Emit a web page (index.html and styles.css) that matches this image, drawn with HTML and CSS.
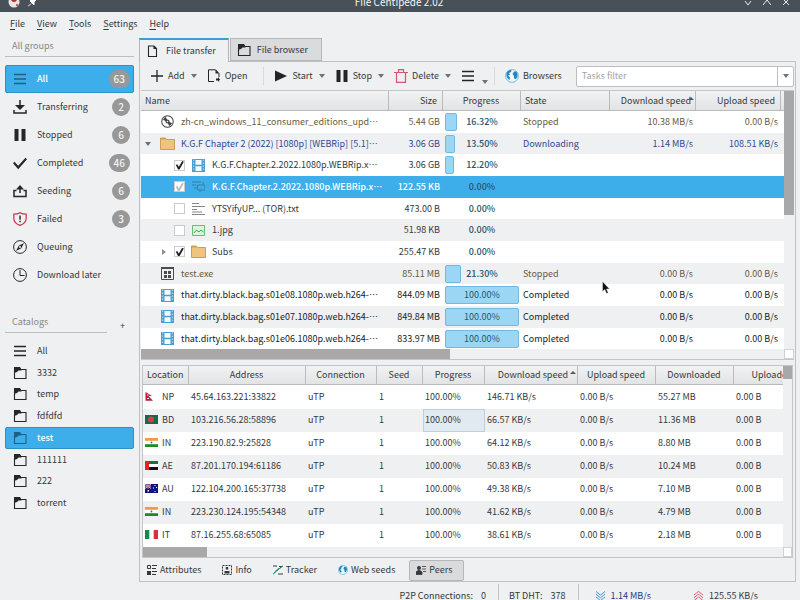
FILE: index.html
```html
<!DOCTYPE html>
<html lang="en">
<head>
<meta charset="utf-8">
<title>File Centipede 2.02</title>
<link rel="stylesheet" href="styles.css">
</head>
<body>
<svg class="defs" aria-hidden="true">
  <symbol id="menu" viewBox="0 0 14 14"><path d="M1 2.500h12M1 7h12M1 11.500h12" stroke="currentColor" stroke-width="1.500"/></symbol>
  <symbol id="download" viewBox="0 0 14 14"><path d="M7 0v8M1 10v3h12v-3" fill="none" stroke="currentColor" stroke-width="1.500"/><path d="M2 5h10L7 10z" fill="currentColor"/></symbol>
  <symbol id="pause" viewBox="0 0 14 14"><path d="M1.500 1h4v12h-4zM8.500 1h4v12h-4z" fill="currentColor"/></symbol>
  <symbol id="check" viewBox="0 0 14 14"><path d="M.7 6.500l4.500 5L13.300 2.500" fill="none" stroke="currentColor" stroke-width="2.200"/></symbol>
  <symbol id="upload" viewBox="0 0 14 14"><path d="M7 9V4M3.500 6.500H1v6h12v-6h-2.500" fill="none" stroke="currentColor" stroke-width="1.500"/><path d="M3 5.500h8L7 1z" fill="currentColor"/></symbol>
  <symbol id="shield" viewBox="0 0 14 14"><path d="M7 .7c2 1.300 4 1.500 6.200 1.500v4c0 3.500-3 6-6.200 7.200C3.800 12.200.8 9.700.8 6.200v-4C3 2.200 5 2 7 .7z" fill="none" stroke="#c9304f" stroke-width="1.200"/><path d="M6.300 3.500h1.500v4.200H6.300zM6.300 8.800h1.500v1.500H6.300z" fill="#333"/></symbol>
  <symbol id="compass" viewBox="0 0 14 14"><circle cx="7" cy="7" r="6.400" fill="none" stroke="currentColor"/><path d="M11 3L8.300 8.300 3 11l2.700-5.300z" fill="currentColor"/><circle cx="7" cy="7" r="1" fill="#eff0f1"/></symbol>
  <symbol id="clock" viewBox="0 0 14 14"><circle cx="7" cy="7" r="6.400" fill="none" stroke="currentColor"/><path d="M7 2v5.500h4.500" fill="none" stroke="currentColor"/></symbol>
  <symbol id="catalog" viewBox="0 0 14 14"><path d="M1.500 5v7.500h11.500V3.500H6" fill="none" stroke="currentColor" stroke-width="1.100"/><path d="M1 1h6l1.500 2.500v1H5.500L4 6 1 7z" fill="currentColor"/></symbol>
  <symbol id="page" viewBox="0 0 14 14"><path d="M2.500 2h5.500L10.500 4.500V12.500h-8zM8 2v2.500h2.500" fill="none" stroke="currentColor" stroke-width="1.100"/></symbol>
  <symbol id="plus" viewBox="0 0 14 14"><path d="M7 1v12M1 7h12" stroke="currentColor" stroke-width="1.300"/></symbol>
  <symbol id="open" viewBox="0 0 14 14"><path d="M7 12.500H1.500V.8h7L12 4.500V8" fill="none" stroke="currentColor"/><path d="M8.500.8v3.700H12zM9 9.500h2V8l2 2.500-2 2.500v-1.500H9z" fill="currentColor"/></symbol>
  <symbol id="play" viewBox="0 0 14 14"><path d="M1 1.500L13 7 1 12.500z" fill="currentColor"/></symbol>
  <symbol id="trash" viewBox="0 0 14 14"><path d="M0 3.500h14M4.500 3V.6h5V3M2.500 3.500v9.900h9V3.500" fill="none" stroke="#d8556f" stroke-width="1.200"/></symbol>
  <symbol id="globe" viewBox="0 0 14 14"><circle cx="7" cy="7" r="6.400" fill="#eef7fc" stroke="#5aa9d6" stroke-width=".8"/><path d="M2 3c1.500-1.700 3-2 4.500-2l-.5 2-2 1 1 2-2 .5 2 2-.5 2.500C2 10 .5 6 2 3zM9 2.500l2.500 0c1.500 2.500 1.500 5-.5 7.500L9 9.500V7L7.500 5z" fill="#2188c6"/></symbol>
  <symbol id="disc" viewBox="0 0 14 14"><circle cx="7" cy="7" r="6.200" fill="none" stroke="#444" stroke-width="1.100"/><path d="M2 5l3-3 2 4-1 1zM12 9l-3 3-2-4 1-1z" fill="#444"/><circle cx="7" cy="7" r="2.200" fill="#444"/><circle cx="7" cy="7" r=".9" fill="#fff"/></symbol>
  <symbol id="folder" viewBox="0 0 15 13"><path d="M.5 1h5l1 1.500h8v10H.5z" fill="#efc57e" stroke="#c99f58"/><path d="M.5 1h5v1.500h-5z" fill="#cfa050"/></symbol>
  <symbol id="film" viewBox="0 0 13 13"><path d="M0 0h13v13H0z" fill="#4a9fd0"/><path d="M3.500 1h6v4.800h-6zM3.500 7.200h6V12h-6z" fill="#f4fbff"/><path d="M1.700.5v12M11.300.5v12" stroke="#b5dcf0" stroke-width="1" stroke-dasharray="1.500 1.500"/></symbol>
  <symbol id="sub" viewBox="0 0 13 13"><path d="M0 2h9M0 5h4M5.500 5H13v5H5.500zM2 8h3M8 10v2M10 3h2" fill="none" stroke="#3380ad"/></symbol>
  <symbol id="text" viewBox="0 0 13 13"><path d="M0 1.500h7M0 4.500h13M0 7.500h5M0 10h10M0 12.500h13" stroke="#777" stroke-width=".9"/></symbol>
  <symbol id="image" viewBox="0 0 13 13"><path d="M.5 1.500h12v10H.5z" fill="#dcf5df" stroke="#63bf74"/><path d="M2 9l2.500-3L7 8l2-2 2.500 2" fill="none" stroke="#3ba953"/></symbol>
  <symbol id="exe" viewBox="0 0 13 13"><path d="M.5.500h12v12H.5z" fill="none" stroke="#4b4b4b"/><path d="M0 0h13v2H0zM3 4h3v3H3zM7 4h3v3H7zM3 8h3v3H3zM7 8h3v3H7z" fill="#4b4b4b"/></symbol>
  <symbol id="attrs" viewBox="0 0 10 10"><path d="M.5.500h3v3h-3z" fill="none" stroke="currentColor"/><path d="M0 6h4v4H0z" fill="currentColor"/><path d="M5 .5h5M5 3.500h4M5 6.500h5M5 9.500h4" stroke="currentColor"/></symbol>
  <symbol id="info" viewBox="0 0 10 10"><path d="M.5.500h9v9h-9z" fill="none" stroke="currentColor" stroke-dasharray="2 1"/><path d="M3.800 2h2.400v2.500H3.800zM2.500 8.500V6h5v2.500z" fill="currentColor"/></symbol>
  <symbol id="tracker" viewBox="0 0 10 10"><path d="M0 1h4M6 1.500h3.500M1 8L9.500 1M5 9h5" stroke="currentColor" fill="none"/><path d="M0 9c3-1 2-4 5-5s3-1 4-3" stroke="#1a9a8a" fill="none"/></symbol>
  <symbol id="peers" viewBox="0 0 10 10"><circle cx="3" cy="3" r="2" fill="currentColor"/><path d="M0 9.500V7l2-1.500h2L6 7v2.500zM6 1.500h4M6 4h4M7 6.500h3" stroke="currentColor" stroke-width=".8" fill="currentColor"/></symbol>
  <symbol id="down2" viewBox="0 0 12 12"><path d="M1 1l5 4 5-4M1 4l5 4 5-4M1 7l5 4 5-4" fill="none" stroke="#2f8fd0"/></symbol>
  <symbol id="up2" viewBox="0 0 12 12"><path d="M1 5l5-4 5 4M1 8l5-4 5 4M1 11l5-4 5 4" fill="none" stroke="#da4f68"/></symbol>
  <symbol id="np" viewBox="0 0 13 9"><path d="M.5 0L7 4H3.500L8 8.700H.5z" fill="#b8203a"/><path d="M2 3h1.500M2 6.500h2" stroke="#fff"/></symbol>
  <symbol id="bd" viewBox="0 0 13 9"><path d="M0 0h13v9H0z" fill="#17684f"/><circle cx="6" cy="4.500" r="3" fill="#e0384b"/></symbol>
  <symbol id="in" viewBox="0 0 13 9"><path d="M0 0h13v9H0z" fill="#fff"/><path d="M0 0h13v2.800H0z" fill="#f29a45"/><path d="M0 6.200h13V9H0z" fill="#218a27"/><circle cx="6.500" cy="4.500" r=".9" fill="#4b5aa8"/></symbol>
  <symbol id="ae" viewBox="0 0 13 9"><path d="M0 0h13v9H0z" fill="#fff"/><path d="M4 0h9v3H4z" fill="#15733c"/><path d="M4 6h9v3H4z" fill="#111"/><path d="M0 0h4v9H0z" fill="#ee1c25"/></symbol>
  <symbol id="au" viewBox="0 0 13 9"><path d="M0 0h13v9H0z" fill="#12147e"/><path d="M0 0l6 4.500M6 0L0 4.500M3 0v4.500M0 2.200h6" stroke="#fff" stroke-width=".8"/><path d="M3 0v4.500M0 2.200h6" stroke="#d8304a" stroke-width=".6"/><path d="M2.500 6h1.500v1.500H2.500zM9.500 1h1v1h-1zM8 3.500h1v1H8zM11 3h1v1h-1zM9.500 7h1v1h-1z" fill="#fff"/></symbol>
  <symbol id="it" viewBox="0 0 13 9"><path d="M0 0h13v9H0z" fill="#fff"/><path d="M0 0h4.300v9H0z" fill="#168a4c"/><path d="M8.700 0H13v9H8.700z" fill="#d0333f"/></symbol>
</svg>
<div class="window">
  <header class="titlebar">
    <div class="title-row">
      <div class="title-side">
        <svg width="12" height="12" viewBox="0 0 12 12"><circle cx="6" cy="6" r="5.500" fill="#e8e4e4"/><circle cx="6" cy="3" r="3" fill="#a33"/><circle cx="9" cy="9" r="1" fill="#a33"/></svg>
        <svg width="8" height="12" viewBox="0 0 8 12"><path d="M0 10.500l3-3M2 5l4 4 0-3 2-2-3-2-2 2z" fill="#fff" stroke="#fff"/></svg>
      </div>
      <span>File Centipede 2.02</span>
      <div class="title-side title-end">
        <svg width="8" height="8" viewBox="0 0 8 8"><path d="M1 3l3 4 3-4" fill="none" stroke="#eee"/></svg>
        <svg width="8" height="8" viewBox="0 0 8 8"><path d="M0 7l4-5 4 5" fill="none" stroke="#eee"/></svg>
        <svg width="8" height="8" viewBox="0 0 8 8"><path d="M1 1l6 6M7 1L1 7" fill="none" stroke="#eee"/></svg>
      </div>
    </div>
  </header>
  <nav class="menubar">
    <button><u>F</u>ile</button><button><u>V</u>iew</button><button><u>T</u>ools</button><button><u>S</u>ettings</button><button><u>H</u>elp</button>
  </nav>
  <div class="content">
    <aside class="sidebar">
      <h2>All groups</h2>
      <ul class="groups">
        <li><button class="item selected"><svg><use href="#menu"/></svg>All<span class="badge">63</span></button></li>
        <li><button class="item"><svg><use href="#download"/></svg>Transferring<span class="badge">2</span></button></li>
        <li><button class="item"><svg><use href="#pause"/></svg>Stopped<span class="badge">6</span></button></li>
        <li><button class="item"><svg><use href="#check"/></svg>Completed<span class="badge">46</span></button></li>
        <li><button class="item"><svg><use href="#upload"/></svg>Seeding<span class="badge">6</span></button></li>
        <li><button class="item"><svg><use href="#shield"/></svg>Failed<span class="badge">3</span></button></li>
        <li><button class="item"><svg><use href="#compass"/></svg>Queuing</button></li>
        <li><button class="item"><svg><use href="#clock"/></svg>Download later</button></li>
      </ul>
      <div class="catalog-head"><h2>Catalogs</h2><button class="add" aria-label="Add catalog">+</button></div>
      <ul class="catalogs">
        <li><button class="item"><svg><use href="#menu"/></svg>All</button></li>
        <li><button class="item"><svg><use href="#catalog"/></svg>3332</button></li>
        <li><button class="item"><svg><use href="#catalog"/></svg>temp</button></li>
        <li><button class="item"><svg><use href="#catalog"/></svg>fdfdfd</button></li>
        <li><button class="item selected"><svg><use href="#catalog"/></svg>test</button></li>
        <li><button class="item"><svg><use href="#catalog"/></svg>111111</button></li>
        <li><button class="item"><svg><use href="#catalog"/></svg>222</button></li>
        <li><button class="item"><svg><use href="#catalog"/></svg>torrent</button></li>
      </ul>
    </aside>
    <main class="main">
      <div class="tabs">
        <button class="tab current-tab"><svg><use href="#page"/></svg>File transfer</button>
        <button class="tab"><svg><use href="#catalog"/></svg>File browser</button>
      </div>
      <div class="panel">
        <div class="toolbar">
          <button class="tool"><svg><use href="#plus"/></svg>Add<i class="caret"></i></button>
          <button class="tool open"><svg><use href="#open"/></svg>Open</button>
          <span class="sep"></span>
          <button class="tool"><svg><use href="#play"/></svg>Start<i class="caret"></i></button>
          <button class="tool"><svg><use href="#pause"/></svg>Stop<i class="caret"></i></button>
          <button class="tool"><svg><use href="#trash"/></svg>Delete<i class="caret"></i></button>
          <button class="tool more" aria-label="More"><svg><use href="#menu"/></svg><i class="caret"></i></button>
          <span class="sep"></span>
          <button class="tool"><svg><use href="#globe"/></svg>Browsers</button>
          <div class="filter"><input type="text" placeholder="Tasks filter" aria-label="Tasks filter"><button aria-label="Filter history"><i class="caret"></i></button></div>
        </div>
        <section class="pane tasks">
          <div class="view">
            <table>
              <colgroup><col><col class="c-size"><col class="c-prog"><col class="c-state"><col class="c-down"><col class="c-up"><col class="c-end"></colgroup>
              <thead><tr><th class="left">Name</th><th class="right">Size</th><th>Progress</th><th class="left">State</th><th class="right sorted">Download speed</th><th class="right">Upload speed</th><th></th></tr></thead>
              <tbody>
                <tr class="stopped"><td><div class="name"><i></i><svg><use href="#disc"/></svg><span>zh-cn_windows_11_consumer_editions_upd<span lang="zh-CN">⋯</span></span></div></td><td>5.44 GB</td><td><div class="bar"><i style="width:16.32%"></i><span>16.32%</span></div></td><td>Stopped</td><td>10.38 MB/s</td><td>0.00 B/s</td><td></td></tr>
                <tr class="active"><td><div class="name"><i class="twisty"></i><svg class="wide"><use href="#folder"/></svg><span>K.G.F Chapter 2 (2022) [1080p] [WEBRip] [5.1]<span lang="zh-CN">⋯</span></span></div></td><td>3.06 GB</td><td><div class="bar"><i style="width:13.5%"></i><span>13.50%</span></div></td><td>Downloading</td><td>1.14 MB/s</td><td>108.51 KB/s</td><td></td></tr>
                <tr><td><label class="name child"><i></i><input type="checkbox" checked><svg><use href="#film"/></svg><span>K.G.F.Chapter.2.2022.1080p.WEBRip.x<span lang="zh-CN">⋯</span></span></label></td><td>3.06 GB</td><td><div class="bar"><i style="width:12.2%"></i><span>12.20%</span></div></td><td></td><td></td><td></td><td></td></tr>
                <tr class="selected"><td><label class="name child"><i></i><input type="checkbox" checked><svg><use href="#sub"/></svg><span>K.G.F.Chapter.2.2022.1080p.WEBRip.x<span lang="zh-CN">⋯</span></span></label></td><td>122.55 KB</td><td><div class="bar"><span>0.00%</span></div></td><td></td><td></td><td></td><td></td></tr>
                <tr><td><label class="name child"><i></i><input type="checkbox"><svg><use href="#text"/></svg><span>YTSYifyUP... (TOR).txt</span></label></td><td>473.00 B</td><td><div class="bar"><span>0.00%</span></div></td><td></td><td></td><td></td><td></td></tr>
                <tr><td><label class="name child"><i></i><input type="checkbox"><svg><use href="#image"/></svg><span>1.jpg</span></label></td><td>51.98 KB</td><td><div class="bar"><span>0.00%</span></div></td><td></td><td></td><td></td><td></td></tr>
                <tr><td><label class="name child"><i class="twisty closed"></i><input type="checkbox" checked><svg class="wide"><use href="#folder"/></svg><span>Subs</span></label></td><td>255.47 KB</td><td><div class="bar"><span>0.00%</span></div></td><td></td><td></td><td></td><td></td></tr>
                <tr class="stopped"><td><div class="name"><i></i><svg><use href="#exe"/></svg><span>test.exe</span></div></td><td>85.11 MB</td><td><div class="bar"><i style="width:21.3%"></i><span>21.30%</span></div></td><td>Stopped</td><td>0.00 B/s</td><td>0.00 B/s</td><td></td></tr>
                <tr class="done"><td><div class="name"><i></i><svg><use href="#film"/></svg><span>that.dirty.black.bag.s01e08.1080p.web.h264-<span lang="zh-CN">⋯</span></span></div></td><td>844.09 MB</td><td><div class="bar"><i style="width:100%"></i><span>100.00%</span></div></td><td>Completed</td><td>0.00 B/s</td><td>0.00 B/s</td><td></td></tr>
                <tr class="done"><td><div class="name"><i></i><svg><use href="#film"/></svg><span>that.dirty.black.bag.s01e07.1080p.web.h264-<span lang="zh-CN">⋯</span></span></div></td><td>849.84 MB</td><td><div class="bar"><i style="width:100%"></i><span>100.00%</span></div></td><td>Completed</td><td>0.00 B/s</td><td>0.00 B/s</td><td></td></tr>
                <tr class="done"><td><div class="name"><i></i><svg><use href="#film"/></svg><span>that.dirty.black.bag.s01e06.1080p.web.h264-<span lang="zh-CN">⋯</span></span></div></td><td>833.97 MB</td><td><div class="bar"><i style="width:100%"></i><span>100.00%</span></div></td><td>Completed</td><td>0.00 B/s</td><td>0.00 B/s</td><td></td></tr>
              </tbody>
            </table>
          </div>
          <div class="vscroll"><i></i></div>
          <div class="hscroll"><i></i></div>
          <div class="corner"></div>
        </section>
        <section class="pane peers">
          <div class="view">
            <table>
              <colgroup><col class="p-loc"><col><col class="p-conn"><col class="p-seed"><col class="p-prog"><col class="p-down"><col class="p-up"><col class="p-up"><col class="p-up"></colgroup>
              <thead><tr><th>Location</th><th>Address</th><th>Connection</th><th>Seed</th><th>Progress</th><th class="sorted">Download speed</th><th>Upload speed</th><th>Downloaded</th><th>Uploaded</th></tr></thead>
              <tbody>
                <tr><td><svg><use href="#np"/></svg>NP</td><td>45.64.163.221:33822</td><td>uTP</td><td>1</td><td>100.00%</td><td>146.71 KB/s</td><td>0.00 B/s</td><td>55.27 MB</td><td>0.00 B</td></tr>
                <tr><td><svg><use href="#bd"/></svg>BD</td><td>103.216.56.28:58896</td><td>uTP</td><td>1</td><td class="current">100.00%</td><td>66.57 KB/s</td><td>0.00 B/s</td><td>11.36 MB</td><td>0.00 B</td></tr>
                <tr><td><svg><use href="#in"/></svg>IN</td><td>223.190.82.9:25828</td><td>uTP</td><td>1</td><td>100.00%</td><td>64.12 KB/s</td><td>0.00 B/s</td><td>8.80 MB</td><td>0.00 B</td></tr>
                <tr><td><svg><use href="#ae"/></svg>AE</td><td>87.201.170.194:61186</td><td>uTP</td><td>1</td><td>100.00%</td><td>50.83 KB/s</td><td>0.00 B/s</td><td>10.24 MB</td><td>0.00 B</td></tr>
                <tr><td><svg><use href="#au"/></svg>AU</td><td>122.104.200.165:37738</td><td>uTP</td><td>1</td><td>100.00%</td><td>49.38 KB/s</td><td>0.00 B/s</td><td>7.10 MB</td><td>0.00 B</td></tr>
                <tr><td><svg><use href="#in"/></svg>IN</td><td>223.230.124.195:54348</td><td>uTP</td><td>1</td><td>100.00%</td><td>41.62 KB/s</td><td>0.00 B/s</td><td>4.79 MB</td><td>0.00 B</td></tr>
                <tr><td><svg><use href="#it"/></svg>IT</td><td>87.16.255.68:65085</td><td>uTP</td><td>1</td><td>100.00%</td><td>38.61 KB/s</td><td>0.00 B/s</td><td>2.18 MB</td><td>0.00 B</td></tr>
              </tbody>
            </table>
          </div>
          <div class="vscroll"><i></i></div>
          <div class="hscroll"><i></i></div>
          <div class="corner"></div>
        </section>
        <div class="detail-tabs">
          <button><svg><use href="#attrs"/></svg>Attributes</button>
          <button><svg><use href="#info"/></svg>Info</button>
          <button><svg><use href="#tracker"/></svg>Tracker</button>
          <button><svg><use href="#globe"/></svg>Web seeds</button>
          <button class="on"><svg><use href="#peers"/></svg>Peers</button>
        </div>
      </div>
    </main>
  </div>
  <footer class="status">
    <span class="stat">P2P Connections:<b>0</b></span>
    <span class="stat">BT DHT:<b>378</b></span>
    <span class="stat rate down"><svg><use href="#down2"/></svg>1.14 MB/s</span>
    <span class="stat rate"><svg><use href="#up2"/></svg>125.55 KB/s</span>
  </footer>
</div>
<svg class="pointer" viewBox="0 0 8 13"><path d="M.5.500v10l2.300-2 1.700 4 1.700-.8-1.700-3.700h3z" fill="#111" stroke="#fff" stroke-width=".4"/></svg>
</body>
</html>
```
FILE: styles.css
```css
* { box-sizing: border-box; }

body {
  margin: 0;
  background: #eff0f1;
  color: #36393c;
  font: 9px/14px "Noto Sans CJK SC", "Noto Sans", sans-serif;
  overflow: hidden;
}

button, input {
  font: inherit;
  color: inherit;
  border: 0;
  padding: 0;
  margin: 0;
  background: none;
  white-space: nowrap;
}

ul { list-style: none; margin: 0; padding: 0; }
svg { width: 14px; height: 14px; flex: none; }
.defs { position: absolute; width: 0; height: 0; }

.window { display: flex; flex-direction: column; height: 100vh; }

.titlebar {
  display: flex;
  align-items: flex-end;
  height: 12px;
  flex: none;
  overflow: hidden;
  background: #485158;
  color: #f4f5f5;
  font-size: 10px;
}
.title-row { flex: 1; display: flex; align-items: center; height: 20px; padding: 0 10px 0 8px; }
.title-side { flex: 1; display: flex; align-items: center; gap: 8px; }
.title-side svg { width: auto; height: auto; }
.title-end { justify-content: flex-end; gap: 11px; }

.menubar { display: flex; flex: none; align-items: center; gap: 12px; height: 24px; padding-left: 10px; }
.menubar u { text-underline-offset: 2px; }

.content { flex: 1; display: flex; min-height: 0; }

.sidebar { width: 139px; flex: none; padding: 0 5px; }
.sidebar h2 {
  margin: 0;
  padding-left: 7px;
  font-size: 9px;
  font-weight: 400;
  line-height: 20px;
  color: #85888a;
  border-bottom: 1px solid #bcbebf;
}
.groups { margin-top: 8px; display: grid; grid-auto-rows: 28px; }
.catalogs { height: 174px; display: grid; grid-auto-rows: 1fr; }
.item {
  width: 100%;
  height: 100%;
  display: flex;
  align-items: center;
  gap: 10px;
  padding: 0 3px 0 7px;
  border: 1px solid transparent;
  border-radius: 2px;
  text-align: left;
}
.item svg { color: #24272a; }
.item.selected { background: #3daee9; border-color: #2b90c6; color: #fff; font-weight: 500; }
.item.selected svg { color: #1f5f86; }
.badge {
  margin-left: auto;
  min-width: 18px;
  height: 18px;
  padding: 0 5px;
  border-radius: 9px;
  background: #989898;
  color: #f2f2f2;
  font-size: 10px;
  font-weight: 500;
  line-height: 18px;
  text-align: center;
}
.catalog-head { display: flex; align-items: flex-end; margin: 23px 0 7px; }
.catalog-head h2 { width: 102px; }
.add { margin: 0 9px 0 auto; }

.main { flex: 1; min-width: 0; display: flex; flex-direction: column; padding-right: 4px; }
.tabs { display: flex; gap: 1px; height: 25px; flex: none; align-items: flex-end; }
.tab {
  display: flex;
  align-items: center;
  gap: 6px;
  height: 23px;
  padding: 0 13px 0 6px;
  border: 1px solid #b4b7b9;
  background: #d9dbdc;
}
.tab svg { color: #24272a; }
.tab.current-tab {
  height: 24px;
  margin-bottom: -1px;
  padding-right: 12px;
  border-top: 2px solid #3f9cce;
  border-bottom: 0;
  background: #eff0f1;
  position: relative;
}
.panel { flex: 1; min-height: 0; display: flex; flex-direction: column; border: 1px solid #bfc2c4; }

.toolbar { display: flex; align-items: center; gap: 10px; height: 28px; flex: none; padding: 0 1px 0 10px; }
.tool { display: flex; align-items: center; gap: 4px; }
.tool svg { color: #222527; }
.open { margin-right: 6px; }
.caret { border: 3px solid transparent; border-top: 4px solid #707375; border-bottom: 0; }
.tool .caret { margin-left: 2px; }
.more { margin-right: -4px; }
.more .caret { margin: 12px 0 0 3px; }
.sep { width: 1px; height: 18px; background: #d8dadb; }
.filter {
  flex: 1;
  display: flex;
  height: 21px;
  margin-left: 4px;
  border: 1px solid #bcbfc1;
  border-radius: 2px;
  background: #fff;
}
.filter input { flex: 1; min-width: 0; padding: 0 5px; outline: 0; }
.filter input::placeholder { color: #9fa2a4; }
.filter button { width: 16px; display: grid; place-items: center; border-left: 1px solid #bcbfc1; }

.pane { display: grid; grid-template: minmax(0, 1fr) 10px / minmax(0, 1fr) 10px; min-height: 0; border: solid #c3c6c8; }
.tasks { flex: 272 1 0; margin: 0 1px; border-width: 1px 0; }
.peers { flex: 193 1 0; margin: 5px 2px 0; border-width: 1px; grid-template-columns: minmax(0, 1fr) 9px; }
.view { overflow: hidden; min-height: 0; }
.vscroll i { display: block; background: #a8a8a8; }
.tasks .vscroll i { height: 48%; }
.peers .vscroll i { height: 7%; }
.hscroll i { display: block; height: 10px; background: #a8a8a8; }
.tasks .hscroll i { width: 48%; }
.peers .hscroll i { width: 10%; }
.corner { background: #fff; border: 1px solid #cfd1d3; }

table { width: 100%; height: 100%; table-layout: fixed; border-collapse: separate; border-spacing: 0; }
.peers table { width: calc(100% + 29px); }
th {
  height: 20px;
  padding: 0 5px 0 4px;
  font-weight: 400;
  background: linear-gradient(#f1f2f2, #e2e3e4);
  border: solid #b9bcbe;
  border-width: 0 1px 1px 0;
  white-space: nowrap;
}
th.left, td { text-align: left; }
th.right { text-align: right; }
.sorted::after {
  content: "";
  display: inline-block;
  margin-left: 2px;
  vertical-align: 4px;
  border: 3px solid transparent;
  border-bottom: 3px solid #55585a;
  border-top: 0;
}
.tasks .sorted { padding-right: 1px; }
.tasks .sorted::after { margin-left: -3px; }
td { padding: 0 2px; white-space: nowrap; overflow: hidden; background: #fff; }
tr:nth-child(even) td { background: #eff0f1; }
.c-size { width: 54px; } .c-prog { width: 78px; } .c-state { width: 89px; }
.c-down { width: 86px; } .c-up { width: 85px; } .c-end { width: 3px; }
.tasks th:last-child, .tasks td:last-child { padding: 0; border-right: 0; }
.tasks td:nth-child(2), .tasks td:nth-child(5), .tasks td:nth-child(6) { text-align: right; padding-right: 3px; }
.tasks td:first-child { padding: 0 0 0 4px; }

.name { display: grid; grid-template-columns: 16px 20px 1fr; align-items: center; }
.name.child { grid-template-columns: 14px 18px 20px 1fr; padding-left: 15px; }
.name svg { width: 13px; height: 13px; }
.name .wide { width: 15px; margin-left: -1px; }
.twisty { width: 6px; border: 3px solid transparent; border-top: 4px solid #6d7072; border-bottom: 0; }
.twisty.closed { width: 4px; margin-left: 2px; border: 3px solid transparent; border-left: 4px solid #8d9092; border-right: 0; }
input[type="checkbox"] { appearance: none; width: 11px; height: 11px; background: #fff; border: 1px solid #c9cbcd; display: grid; }
input[type="checkbox"]:checked::before {
  content: "";
  background: #222;
  clip-path: polygon(8% 45%, 28% 42%, 42% 68%, 80% 5%, 98% 12%, 50% 98%, 34% 98%);
}
.bar { display: grid; height: 18px; align-items: center; }
.bar > * { grid-area: 1 / 1; }
.bar i { height: 18px; background: #9bd6f5; border: 1px solid #72b9df; border-radius: 2px; }
.bar span { justify-self: center; color: #25566c; font-weight: 500; z-index: 1; }
.stopped { color: #6b583c; }
.active { color: #2c4c92; }
.done { color: #202325; }
.done .bar span { font-weight: 400; }
.tasks tr.selected td { background: #3daee9; color: #fff; font-weight: 500; }
.selected input[type="checkbox"]::before { opacity: .3; }

.peers th { height: 19px; }
.peers td svg { width: 13px; height: 9px; margin-right: 4px; vertical-align: -1px; }
.p-loc { width: 46px; } .p-conn { width: 71px; } .p-seed { width: 46px; }
.p-prog { width: 62px; } .p-down { width: 93px; } .p-up { width: 78px; }
.peers .sorted { text-align: right; padding-right: 1px; }
.peers td.current { background: #e2eaf1; box-shadow: inset 0 0 0 1px #c0ced9; }

.detail-tabs { display: flex; flex: none; gap: 7px; height: 23px; align-items: center; padding-top: 1px; }
.detail-tabs button { display: flex; align-items: center; gap: 3px; height: 21px; padding: 0 6px; border: 1px solid transparent; border-radius: 2px; }
.detail-tabs svg { width: 10px; height: 10px; }
.detail-tabs .on { padding-right: 11px; border-color: #b5b8ba; background: #d9dbdc; }

.status { flex: none; display: flex; justify-content: flex-end; height: 18px; padding: 2px 42px 0 0; }
.stat { display: flex; align-items: center; flex: none; height: 24px; padding: 0 12px 0 10px; border-right: 1px solid #c3c6c8; }
.stat b { font-weight: 400; margin-left: 8px; }
.rate { gap: 5px; padding: 0 0 0 16px; border: 0; }
.rate + .rate { padding-left: 42px; }
.rate svg { width: 11px; height: 12px; }
.down { color: #1d4080; }

.pointer { position: absolute; left: 602px; top: 281px; width: 8px; height: 13px; }
```
